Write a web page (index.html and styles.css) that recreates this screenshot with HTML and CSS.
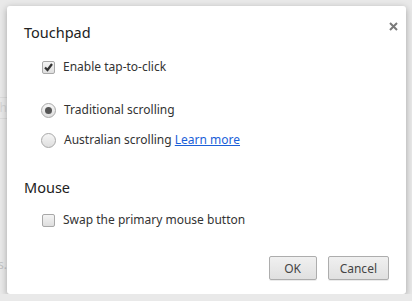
FILE: index.html
```html
<!DOCTYPE html>
<html lang="en">
<head>
    <meta charset="UTF-8">
    <meta name="viewport" content="width=device-width, initial-scale=1.0">
    <title>Touchpad and mouse settings</title>
    <link rel="stylesheet" href="styles.css">
</head>
<body>
    <div class="backdrop-input">th</div>
    <div class="backdrop-text">s.</div>

    <div class="dialog">
        <button class="close" title="Close">
            <svg width="9" height="9" viewBox="0 0 9 9">
                <path d="M1 1 L8 8 M8 1 L1 8" stroke="#7a7a7a" stroke-width="2" fill="none"/>
            </svg>
        </button>

        <h2 class="section-title">Touchpad</h2>
        <label class="option first">
            <span class="checkbox">
                <svg width="11" height="11" viewBox="0 0 11 11">
                    <path d="M2 5.5 L4.5 8 L9 2" stroke="#333" stroke-width="2.2" fill="none"/>
                </svg>
            </span>
            <span>Enable tap-to-click</span>
        </label>

        <label class="option radio-first">
            <span class="radio checked"></span>
            <span>Traditional scrolling</span>
        </label>
        <label class="option radio-second">
            <span class="radio"></span>
            <span>Australian scrolling <a href="#" class="learn-more">Learn more</a></span>
        </label>

        <h2 class="section-title mouse">Mouse</h2>
        <label class="option first">
            <span class="checkbox"></span>
            <span>Swap the primary mouse button</span>
        </label>

        <div class="actions">
            <button class="btn">OK</button>
            <button class="btn">Cancel</button>
        </div>
    </div>
</body>
</html>
```

FILE: styles.css
```css
body {
    margin: 0;
    background-color: #e9e9e9;
    font-family: "Noto Sans", "Open Sans", sans-serif;
    color: #333;
    overflow: hidden;
}
.backdrop-input {
    position: absolute;
    left: -20px;
    top: 97px;
    width: 26px;
    height: 20px;
    border: 1px solid #dcdcdc;
    color: #d4d4d4;
    font-size: 12px;
    line-height: 20px;
    text-align: right;
}
.backdrop-text {
    position: absolute;
    left: -2px;
    top: 256px;
    color: #c4c4c4;
    font-size: 12px;
}
.dialog {
    position: relative;
    margin: 6px 0 0 7px;
    width: 399px;
    height: 288px;
    box-sizing: border-box;
    padding: 16px 17px 0 17px;
    background-color: #fff;
    border-radius: 3px;
    box-shadow: 0 2px 7px rgba(0, 0, 0, 0.3);
}
.close {
    position: absolute;
    top: 10px;
    right: 2px;
    width: 21px;
    height: 21px;
    padding: 0;
    border: none;
    background: none;
    display: flex;
    align-items: center;
    justify-content: center;
}
.section-title {
    margin: 0;
    font-size: 14.5px;
    font-weight: normal;
    line-height: 20px;
    color: #222;
}
.section-title.mouse {
    margin-top: 28px;
}
.option {
    display: flex;
    align-items: center;
    margin-left: 18px;
    font-size: 12px;
    line-height: 18px;
    white-space: nowrap;
}
.option.first {
    margin-top: 16px;
}
.section-title.mouse + .option {
    margin-top: 14px;
}
.option.radio-first {
    margin-top: 25px;
}
.option.radio-second {
    margin-top: 12px;
}
.checkbox {
    width: 13px;
    height: 13px;
    box-sizing: border-box;
    margin-right: 8px;
    border: 1px solid #a8a8a8;
    border-radius: 2px;
    background: linear-gradient(#f4f4f4, #dedede);
    display: flex;
    align-items: center;
    justify-content: center;
}
.radio {
    width: 15px;
    height: 15px;
    box-sizing: border-box;
    margin: 0 8px 0 -1px;
    border: 1px solid #a8a8a8;
    border-radius: 50%;
    background: linear-gradient(#f6f6f6, #dedede);
    display: flex;
    align-items: center;
    justify-content: center;
}
.radio.checked::after {
    content: "";
    width: 7px;
    height: 7px;
    border-radius: 50%;
    background-color: #555;
}
.learn-more {
    color: #1a5fd8;
}
.actions {
    display: flex;
    justify-content: flex-end;
    gap: 11px;
    margin-top: 27px;
}
.btn {
    height: 24px;
    min-width: 48px;
    padding: 0 11px;
    font-family: "Noto Sans", "Open Sans", sans-serif;
    font-size: 12px;
    color: #444;
    border: 1px solid #adadad;
    border-radius: 2px;
    background: linear-gradient(#f0f0f0, #e0e0e0);
    box-shadow: 0 1px 0 rgba(0, 0, 0, 0.08);
}
```
